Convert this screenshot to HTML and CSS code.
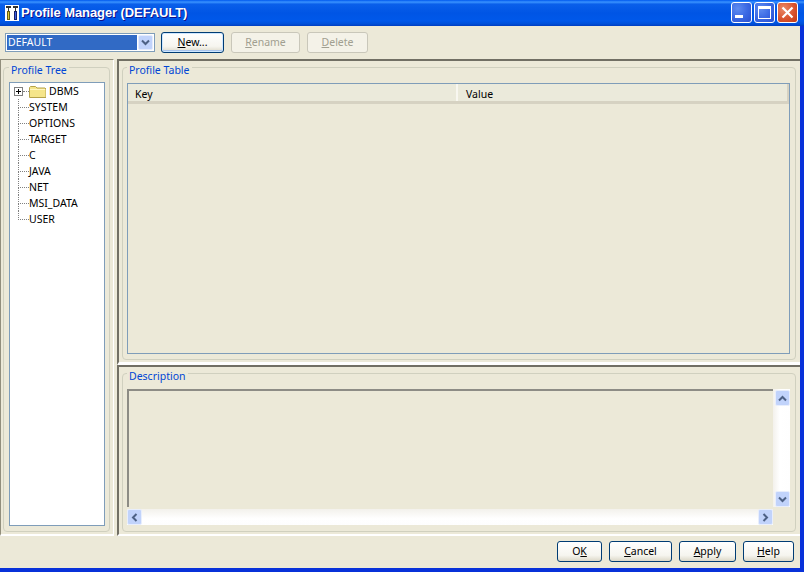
FILE: index.html
```html
<!DOCTYPE html>
<html lang="en">
<head>
<meta charset="utf-8">
<title>Profile Manager (DEFAULT)</title>
<link rel="stylesheet" href="styles.css">
</head>
<body>
<div class="window">
  <header class="titlebar">
    <svg class="app-icon" width="14" height="16" viewBox="0 0 14 16">
      <rect width="14" height="16" fill="#fff"/>
      <path d="M1 1h5v2H4v3H3V3H1z" fill="#333"/>
      <rect x="2" y="6" width="3" height="9" fill="#6a5e10"/>
      <rect x="3" y="7" width="1" height="7" fill="#d8c838"/>
      <path d="M8 1h5v2h-2v3h-1V3H8z" fill="#333"/>
      <rect x="9" y="6" width="3" height="9" fill="#14206a"/>
      <rect x="10" y="7" width="1" height="7" fill="#3c5ce0"/>
    </svg>
    <span class="title">Profile Manager (DEFAULT)</span>
    <div class="caption-buttons">
      <div class="cap cap-blue"><span class="cap-min"></span></div>
      <div class="cap cap-blue"><span class="cap-max"></span></div>
      <div class="cap cap-red">
        <svg width="13" height="13" viewBox="0 0 13 13"><path d="M1.500 1.500l10 10M11.500 1.500l-10 10" stroke="#fff" stroke-width="2.200" fill="none"/></svg>
      </div>
    </div>
  </header>

  <div class="client">
    <div class="toolbar">
      <div class="combo">
        <span class="combo-value">DEFAULT</span>
        <span class="combo-arrow">
          <svg width="9" height="7" viewBox="0 0 9 7"><path d="M1 1.500l3.500 3.500L8 1.500" stroke="#4d6185" stroke-width="2" fill="none"/></svg>
        </span>
      </div>
      <button class="btn btn-default btn-new"><u>N</u>ew...</button>
      <button class="btn btn-rename" disabled><u>R</u>ename</button>
      <button class="btn btn-delete" disabled><u>D</u>elete</button>
    </div>

    <div class="panes">
      <section class="pane pane-left">
        <div class="group group-tree">
          <div class="legend legend-tree">Profile Tree</div>
          <div class="tree">
            <div class="tree-row tree-root">
              <span class="expander"></span>
              <span class="stub"></span>
              <svg class="folder" width="17" height="13" viewBox="0 0 17 13">
                <path d="M.5 12.500V2.500l1-1h5l1.500 1.500h8l1 1v8.500z" fill="#f5e58a" stroke="#b5a24a"/>
                <rect x="1" y="4" width="15" height="1" fill="#fff6c0"/>
              </svg>
              <span class="node-label">DBMS</span>
            </div>
            <div class="tree-row"><span class="elbow"></span><span class="node-label">SYSTEM</span></div>
            <div class="tree-row"><span class="elbow"></span><span class="node-label">OPTIONS</span></div>
            <div class="tree-row"><span class="elbow"></span><span class="node-label">TARGET</span></div>
            <div class="tree-row"><span class="elbow"></span><span class="node-label">C</span></div>
            <div class="tree-row"><span class="elbow"></span><span class="node-label">JAVA</span></div>
            <div class="tree-row"><span class="elbow"></span><span class="node-label">NET</span></div>
            <div class="tree-row"><span class="elbow"></span><span class="node-label">MSI_DATA</span></div>
            <div class="tree-row"><span class="elbow elbow-last"></span><span class="node-label">USER</span></div>
          </div>
        </div>
      </section>

      <div class="right-col">
        <section class="pane pane-top">
          <div class="group group-right">
            <div class="legend">Profile Table</div>
            <div class="table">
              <div class="table-head">
                <div class="th th-key">Key</div>
                <div class="th th-value">Value</div>
              </div>
            </div>
          </div>
        </section>
        <section class="pane pane-bottom">
          <div class="group group-right">
            <div class="legend">Description</div>
            <div class="desc-grid">
              <div class="desc-text"></div>
              <div class="vscroll">
                <span class="sb-btn"><svg width="9" height="7" viewBox="0 0 9 7"><path d="M1 5.500l3.500-3.500L8 5.500" stroke="#4d6185" stroke-width="2" fill="none"/></svg></span>
                <span class="sb-btn"><svg width="9" height="7" viewBox="0 0 9 7"><path d="M1 1.500l3.500 3.500L8 1.500" stroke="#4d6185" stroke-width="2" fill="none"/></svg></span>
              </div>
              <div class="hscroll">
                <span class="sb-btn"><svg width="7" height="9" viewBox="0 0 7 9"><path d="M5.500 1L2 4.500 5.500 8" stroke="#4d6185" stroke-width="2" fill="none"/></svg></span>
                <span class="sb-btn"><svg width="7" height="9" viewBox="0 0 7 9"><path d="M1.500 1L5 4.500 1.500 8" stroke="#4d6185" stroke-width="2" fill="none"/></svg></span>
              </div>
            </div>
          </div>
        </section>
      </div>
    </div>

    <footer class="footer">
      <button class="btn btn-ok">O<u>K</u></button>
      <button class="btn btn-cancel"><u>C</u>ancel</button>
      <button class="btn btn-apply"><u>A</u>pply</button>
      <button class="btn btn-help"><u>H</u>elp</button>
    </footer>
  </div>
</div>
</body>
</html>
```
FILE: styles.css
```css
* { box-sizing: border-box; }
html, body { margin: 0; padding: 0; }
body {
  width: 804px;
  height: 572px;
  overflow: hidden;
  font-family: "Noto Sans", "Liberation Sans", sans-serif;
  font-size: 10.500px;
  color: #000;
  background: #ece9d8;
}
.window {
  width: 804px;
  height: 572px;
  display: flex;
  flex-direction: column;
  border-right: 4px solid #0831d9;
  border-bottom: 4px solid #0831d9;
  background: #ece9d8;
}

/* title bar */
.titlebar {
  height: 26px;
  margin-right: -4px;
  flex: none;
  display: flex;
  align-items: center;
  padding: 0 6px 1px 5px;
  background: linear-gradient(180deg, #0058ee 0%, #3a93ff 8%, #0a5fea 16%, #0055e5 50%, #0058ea 80%, #0050d8 92%, #003dc0 100%);
}
.app-icon { flex: none; margin-right: 2px; }
.title {
  font-family: "Liberation Sans", sans-serif;
  font-weight: 700;
  font-size: 13px;
  letter-spacing: -0.1px;
  color: #fff;
  text-shadow: 1px 1px 0 #0f1089;
  white-space: nowrap;
}
.caption-buttons { margin-left: auto; display: flex; gap: 2px; }
.cap {
  width: 21px;
  height: 21px;
  border: 1px solid #fff;
  border-radius: 3px;
  display: flex;
  align-items: center;
  justify-content: center;
}
.cap-blue { background: radial-gradient(circle at 30% 30%, #5f8cf0 0%, #3c6ae4 50%, #2a4fd0 100%); }
.cap-red { background: radial-gradient(circle at 30% 30%, #e98a68 0%, #d9542f 55%, #c23a14 100%); }
.cap-min { width: 8px; height: 3px; background: #fff; align-self: flex-end; margin: 0 5px 4px 0; }
.cap-max { width: 13px; height: 13px; border: 1px solid #fff; border-top-width: 3px; }

/* client area */
.client { flex: 1; min-height: 0; display: flex; flex-direction: column; }
.toolbar {
  height: 33px;
  flex: none;
  display: flex;
  align-items: center;
  padding: 0 0 0 5px;
}
.combo {
  width: 150px;
  height: 19px;
  border: 1px solid #7f9db9;
  background: #fff;
  display: flex;
  padding: 1px;
  margin-right: 6px;
}
.combo-value {
  flex: 1;
  background: #316ac5;
  color: #fff;
  line-height: 15px;
  padding-left: 1px;
}
.combo-arrow {
  width: 15px;
  margin-left: 1px;
  background: #c1d3fb;
  border: 1px solid #e4ebfd;
  border-radius: 2px;
  display: flex;
  align-items: center;
  justify-content: center;
}
.btn {
  height: 21px;
  padding: 0;
  font: inherit;
  border: 1px solid #003c74;
  border-radius: 3px;
  background: linear-gradient(180deg, #fff 0%, #f6f5ef 70%, #dcd8c8 100%);
  color: #000;
  line-height: 17px;
}
.btn:disabled {
  border-color: #c9c7ba;
  background: #f4f2e8;
  color: #a19f90;
}
.btn-default { box-shadow: inset 0 0 0 1px #cee7ff, inset 0 -1px 0 1px #a8c4ec; }
.btn-new { width: 63px; margin-right: 7px; }
.btn-rename { width: 69px; margin-right: 7px; }
.btn-delete { width: 61px; }

/* panes */
.panes { flex: none; height: 477px; display: flex; gap: 3px; }
.pane { display: flex; }
.pane-left {
  width: 114px;
  border-top: 1px solid #918e7c;
  border-left: 1px solid #918e7c;
  border-right: 1px solid #fff;
  border-bottom: 2px solid #fff;
  padding: 7px 3px 2px 2px;
}
.right-col { flex: 1; display: flex; flex-direction: column; }
.pane-top,
.pane-bottom {
  border-top: 2px solid #716f64;
  border-left: 2px solid #716f64;
  padding: 6px 4px 2px 3px;
}
.pane-top { height: 306px; flex: none; border-bottom: 3px solid #fff; }
.pane-bottom { flex: 1; min-height: 0; border-bottom: 2px solid #fff; }
.group {
  flex: 1;
  min-width: 0;
  position: relative;
  border: 1px solid #d0d0bf;
  border-radius: 4px;
}
.group-right { padding: 15px 5px 0 4px; }
.group-tree { display: flex; padding: 14px 4px 5px 5px; }
.legend {
  position: absolute;
  top: -4px;
  left: 4px;
  padding: 0 2px;
  background: #ece9d8;
  color: #0046d5;
  line-height: 13px;
}
.legend-tree { left: 5px; }

/* tree */
.tree {
  flex: 1;
  height: 444px;
  background: #fff;
  border: 1px solid #7f9db9;
  padding-left: 8px;
}
.tree-row { height: 16px; display: flex; align-items: center; }
.expander {
  width: 9px;
  height: 9px;
  margin-left: -4px;
  border: 1px solid #808080;
  background:
    linear-gradient(#000, #000) center / 5px 1px no-repeat,
    linear-gradient(#000, #000) center / 1px 5px no-repeat,
    #fff;
  flex: none;
}
.stub { width: 6px; border-top: 1px dotted #808080; flex: none; }
.folder { flex: none; margin-right: 3px; }
.elbow {
  width: 11px;
  height: 9px;
  align-self: flex-start;
  border-left: 1px dotted #808080;
  border-bottom: 1px dotted #808080;
  position: relative;
  flex: none;
}
.elbow::after {
  content: "";
  position: absolute;
  left: -1px;
  top: 9px;
  height: 7px;
  border-left: 1px dotted #808080;
}
.elbow-last::after { display: none; }
.node-label { white-space: nowrap; }

/* table */
.table {
  height: 271px;
  border: 1px solid #7f9db9;
}
.table-head {
  height: 20px;
  display: flex;
  border-bottom: 3px solid #d6d2c2;
  background: #ebeadb;
}
.th { line-height: 20px; height: 17px; padding-left: 7px; }
.th-key { width: 330px; border-right: 2px solid #f8f7f0; }
.th-value { flex: 1; padding-left: 8px; border-right: 2px solid #d6d2c2; }

/* description */
.desc-grid {
  display: grid;
  grid-template-columns: 646px 17px;
  grid-template-rows: 118px 18px;
}
.desc-text {
  border-top: 2px solid #8d8c85;
  border-left: 2px solid #8d8c85;
  background: #ece9d8;
}
.vscroll {
  display: flex;
  flex-direction: column;
  justify-content: space-between;
  background: linear-gradient(90deg, #f3f1ec, #fff 40%, #fefefe);
  padding: 1px 0 0 2px;
}
.hscroll {
  grid-column: 1;
  display: flex;
  justify-content: space-between;
  margin-top: 2px;
  background: linear-gradient(180deg, #f3f1ec, #fff 60%, #fefefe);
}
.sb-btn {
  width: 15px;
  height: 16px;
  background: #c1d3fb;
  border: 1px solid #e8eefc;
  border-radius: 2px;
  display: flex;
  align-items: center;
  justify-content: center;
}

/* footer */
.footer {
  flex: 1;
  display: flex;
  justify-content: flex-end;
  gap: 7px;
  padding: 5px 6px 0 0;
  align-items: flex-start;
}
.btn-ok { width: 45px; }
.btn-cancel { width: 63px; }
.btn-apply { width: 57px; }
.btn-help { width: 51px; }
```
